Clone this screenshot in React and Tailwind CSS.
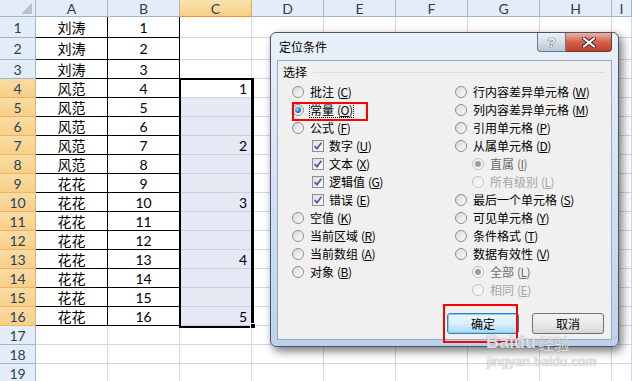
import React from 'react';

const rowHeights = [21, 22, ...Array(17).fill(19)];
const colLetters = ['A', 'B', 'C', 'D', 'E', 'F', 'G', 'H', 'I'];
const colWidths = ['w-[72px]', 'w-[72px]', 'w-[72px]', 'w-[72px]', 'w-[72px]', 'w-[72px]', 'w-[72px]', 'w-[72px]', 'w-[20px]'];

function nameFor(r) {
  if (r <= 3) return '刘涛';
  if (r <= 8) return '风范';
  return '花花';
}
const cVals = { 4: '1', 7: '2', 10: '3', 13: '4', 16: '5' };

function HeaderRow() {
  return (
    <div className="flex h-[17px]">
      <div className="relative w-[36px] shrink-0 border-r border-b border-[#9eb6ce] bg-[#e4ecf7]">
        <svg className="absolute right-[3px] bottom-[2px]" width="11" height="11" viewBox="0 0 11 11">
          <polygon points="11,0 11,11 0,11" fill="#b4c2d3" />
        </svg>
      </div>
      {colLetters.map((l, i) => (
        <div
          key={l}
          className={
            'shrink-0 flex items-center justify-center border-r border-b text-[14px] text-[#27415f] font-[Lato,sans-serif] ' +
            colWidths[i] +
            (l === 'C'
              ? ' bg-gradient-to-b from-[#fbe2b0] to-[#f7cf86] border-r-[#f2a54e] border-b-[#f29436]'
              : ' bg-[#e4ecf7] border-[#9eb6ce]')
          }
        >
          {l}
        </div>
      ))}
    </div>
  );
}

function DataRow({ r, h }) {
  const sel = r >= 4 && r <= 16;
  return (
    <div className="flex" style={{ height: h }}>
      <div
        className={
          'w-[36px] shrink-0 flex items-center justify-center border-r border-b text-[14px] text-[#27415f] font-[Lato,sans-serif] ' +
          (sel ? 'bg-gradient-to-b from-[#fbdca3] to-[#f8cf87] border-[#f1b266]' : 'bg-[#e4ecf7] border-[#9eb6ce]')
        }
      >
        {r}
      </div>
      {colLetters.map((l, i) => {
        let cls = 'shrink-0 border-r border-b ' + colWidths[i];
        let content = null;
        if ((l === 'A' || l === 'B') && r <= 16) {
          cls += ' border-black bg-white flex items-center justify-center text-black text-[14px]';
          if (l === 'A') {
            cls += " font-['Noto_Sans_CJK_SC',sans-serif]";
            content = nameFor(r);
          } else {
            cls += ' font-[Lato,sans-serif]';
            content = r;
          }
        } else if (l === 'C' && sel) {
          cls +=
            ' flex items-center justify-end pr-[4px] text-[14px] text-black font-[Lato,sans-serif] ' +
            (r === 4 ? 'bg-white border-[#d0d7e5]' : 'bg-[#e6e9f4] border-[#c9d0e3]');
          content = cVals[r] || null;
        } else {
          cls += ' bg-white border-[#d0d7e5]';
        }
        return (
          <div key={l} className={cls}>
            {content}
          </div>
        );
      })}
    </div>
  );
}

function Radio({ checked, disabled }) {
  return (
    <span
      className={
        'w-[12px] h-[12px] rounded-full border shrink-0 flex items-center justify-center ' +
        (disabled
          ? 'border-[#c2c2c2] bg-gradient-to-br from-[#ececec] to-[#fafafa]'
          : 'border-[#8c8f94] bg-gradient-to-br from-[#d6d8db] to-[#fdfdfd]')
      }
    >
      {checked &&
        (disabled ? (
          <span className="w-[6px] h-[6px] rounded-full bg-[#9c9c9c]" />
        ) : (
          <span className="w-[6px] h-[6px] rounded-full bg-[radial-gradient(circle_at_35%_35%,#9bdcff,#1f78c2_55%,#0c3f74)]" />
        ))}
    </span>
  );
}

function Check() {
  return (
    <span className="w-[12px] h-[12px] border border-[#8c8f94] bg-gradient-to-br from-[#dcdee2] to-[#fbfbfb] shrink-0 flex items-center justify-center">
      <svg width="10" height="10" viewBox="0 0 10 10">
        <path d="M1.6 5.2 L4 7.6 L8.4 1.8" fill="none" stroke="#4b5e98" strokeWidth="1.7" />
      </svg>
    </span>
  );
}

function Opt({ type = 'radio', checked, disabled, dim, label, acc, indent, focus }) {
  const color = dim ? 'text-[#a6a6a6]' : disabled ? 'text-[#6d6d6d]' : 'text-black';
  const indentCls = indent === 'l' ? 'pl-[20px]' : indent === 'r' ? 'pl-[17px]' : '';
  const text = (
    <span className={'whitespace-nowrap ' + color}>
      {label}
      <span className="ml-[3px] tracking-[-0.5px] text-[12px]">
        (<span className="underline">{acc}</span>)
      </span>
    </span>
  );
  return (
    <div className={'h-[18px] flex items-center ' + (type === 'check' ? 'gap-[5px] ' : 'gap-[6px] ') + indentCls}>
      {type === 'check' ? <Check /> : <Radio checked={checked} disabled={disabled || dim} />}
      {focus ? <span className="outline outline-1 outline-dotted outline-black leading-[14px]">{text}</span> : text}
    </div>
  );
}

function Dialog() {
  const left = [
    { label: '批注', acc: 'C' },
    { label: '常量', acc: 'O', checked: true, focus: true },
    { label: '公式', acc: 'F' },
    { label: '数字', acc: 'U', type: 'check', indent: 'l' },
    { label: '文本', acc: 'X', type: 'check', indent: 'l' },
    { label: '逻辑值', acc: 'G', type: 'check', indent: 'l' },
    { label: '错误', acc: 'E', type: 'check', indent: 'l' },
    { label: '空值', acc: 'K' },
    { label: '当前区域', acc: 'R' },
    { label: '当前数组', acc: 'A' },
    { label: '对象', acc: 'B' },
  ];
  const right = [
    { label: '行内容差异单元格', acc: 'W' },
    { label: '列内容差异单元格', acc: 'M' },
    { label: '引用单元格', acc: 'P' },
    { label: '从属单元格', acc: 'D' },
    { label: '直属', acc: 'I', indent: 'r', checked: true, disabled: true },
    { label: '所有级别', acc: 'L', indent: 'r', dim: true },
    { label: '最后一个单元格', acc: 'S' },
    { label: '可见单元格', acc: 'Y' },
    { label: '条件格式', acc: 'T' },
    { label: '数据有效性', acc: 'V' },
    { label: '全部', acc: 'L', indent: 'r', checked: true, disabled: true },
    { label: '相同', acc: 'E', indent: 'r', dim: true },
  ];
  return (
    <div className="absolute left-[270px] top-[32px] w-[349px] h-[315px] rounded-[6px] border border-[#4a5666] bg-gradient-to-b from-[#e9f0f9] via-[#d3e2f3] to-[#bcd2ec] shadow-[3px_4px_10px_rgba(0,0,0,0.55)] flex flex-col px-[6px] pb-[6px] font-['Noto_Sans_CJK_SC','Liberation_Sans',sans-serif] text-[12px]">
      <div className="h-[27px] shrink-0 flex items-center pl-[2px] text-[12px] text-black">定位条件</div>
      <div className="absolute top-0 right-[6px] flex h-[19px]">
        <div className="w-[29px] h-full border border-t-0 border-[#6b7889] rounded-bl-[4px] bg-gradient-to-b from-[#eef2f7] via-[#d5dde7] to-[#b9c6d5] flex items-center justify-center">
          <span className="text-[13px] font-bold text-white leading-none font-['Liberation_Sans',sans-serif] [text-shadow:0_0_1px_#333,0_0_1px_#333]">?</span>
        </div>
        <div className="w-[46px] h-full border border-t-0 border-l-0 border-[#6b3a33] rounded-br-[4px] bg-gradient-to-b from-[#eab3a6] via-[#d4604a] to-[#c3402a] flex items-center justify-center">
          <svg width="14" height="11" viewBox="0 0 14 11">
            <path d="M2 1.5 L12 9.5 M12 1.5 L2 9.5" stroke="#3a2a28" strokeWidth="4" strokeLinecap="round" />
            <path d="M2 1.5 L12 9.5 M12 1.5 L2 9.5" stroke="#ffffff" strokeWidth="2.2" strokeLinecap="round" />
          </svg>
        </div>
      </div>
      <div className="flex-1 border border-[#98a9bd] bg-[#f0f0f0] flex flex-col">
        <div className="h-[14px] mt-[4px] pl-[5px] pr-[6px] flex items-center">
          <span className="text-black">选择</span>
          <span className="flex-1 ml-[6px] h-0 border-t border-[#d5dfe5]" />
        </div>
        <div className="mt-[4px] flex">
          <div className="pl-[14px] w-[177px] flex flex-col">
            {left.map((o, i) => (
              <Opt key={i} {...o} />
            ))}
          </div>
          <div className="flex flex-col">
            {right.map((o, i) => (
              <Opt key={i} {...o} />
            ))}
          </div>
        </div>
        <div className="mt-[14px] pr-[7px] flex justify-end gap-[13px]">
          <div className="w-[72px] h-[21px] rounded-[3px] border border-[#3c7fb1] bg-gradient-to-b from-[#eaf6fd] via-[#d9f0fc] to-[#a7d9f5] flex items-center justify-center text-black shadow-[inset_0_0_0_1px_#7fd0f5]">
            确定
          </div>
          <div className="w-[72px] h-[21px] rounded-[3px] border border-[#707070] bg-gradient-to-b from-[#f2f2f2] via-[#ebebeb] to-[#d5d5d5] flex items-center justify-center text-black">
            取消
          </div>
        </div>
      </div>
      <div className="absolute left-[21px] top-[69px] w-[76px] h-[19px] border-2 border-[#ff0000]" />
      <div className="absolute left-[172px] top-[271px] w-[75px] h-[39px] border-2 border-[#ff0000]" />
    </div>
  );
}

export default function App() {
  return (
    <div className="relative w-[632px] h-[381px] overflow-hidden bg-white">
      <div className="flex flex-col">
        <HeaderRow />
        {rowHeights.map((h, i) => (
          <DataRow key={i} r={i + 1} h={h} />
        ))}
      </div>
      <div className="absolute left-[179px] top-[78px] w-[75px] h-[250px] border-2 border-r-[3px] border-black" />
      <div className="absolute left-[250px] top-[323px] w-[6px] h-[6px] bg-black border border-white" />
      <Dialog />
      <div className="absolute left-[486px] top-[333px] flex items-end text-[rgba(255,255,255,0.75)] [text-shadow:0_0_1px_rgba(90,90,90,0.7)] pointer-events-none">
        <span className="text-[18px] font-bold leading-none font-['Liberation_Sans',sans-serif]">Baidu</span>
        <span className="ml-[2px] text-[16px] leading-none font-['Noto_Sans_CJK_SC',sans-serif]">经验</span>
      </div>
      <div className="absolute left-[487px] top-[355px] text-[13px] leading-none tracking-[0.3px] text-[rgba(255,255,255,0.8)] [text-shadow:0_0_1px_rgba(90,90,90,0.8)] font-['Liberation_Sans',sans-serif] pointer-events-none">
        jingyan.baidu.com
      </div>
    </div>
  );
}
